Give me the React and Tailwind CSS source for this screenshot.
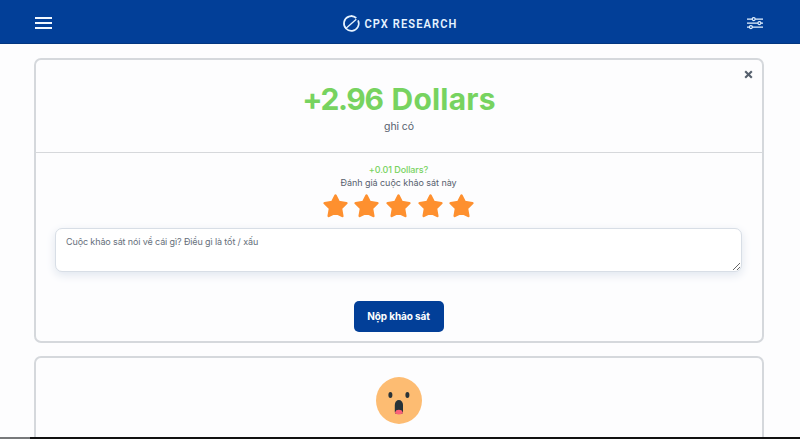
import React, { useState } from "react";

const Star = ({ onClick }) => (
  <button onClick={onClick} className="w-[25px] h-6">
    <svg viewBox="0 0 25 24" className="block w-[25px] h-6" fill="#fe902f">
      <path
        d="M12.5 1.6 L15.8 8 L23.3 9.2 L18 14.4 L19.3 22 L12.5 18.6 L5.7 22 L7 14.4 L1.7 9.2 L9.2 8 Z"
        stroke="#fe902f"
        strokeWidth="2.5"
        strokeLinejoin="round"
      />
    </svg>
  </button>
);

const Logo = () => (
  <svg viewBox="0 0 116 20" className="w-[116px] h-5" fill="none">
    <path
      d="M12.8 3.9A7.4 7.4 0 1 0 16.1 7.4M5.3 4.5A7.4 7.4 0 0 1 14.3 5"
      stroke="#e6f3ff"
      strokeWidth="1.7"
    />
    <path d="M3.5 15.8L14.3 6.2" stroke="#e6f3ff" strokeWidth="1.3" />
    <text
      transform="translate(22.5 14.7) scale(0.88 1)"
      fill="#e6f3ff"
      fontFamily="Roboto, sans-serif"
      fontSize="12.6"
      fontWeight="600"
      textLength="104.5"
      lengthAdjust="spacing"
    >
      CPX RESEARCH
    </text>
  </svg>
);

const Header = () => (
  <header className="h-11 shrink-0 bg-[#023f98] border-b border-[#023680] flex items-center justify-between pt-[2px] pl-[35px] pr-[37px]">
    <button className="w-[17px] flex flex-col gap-[3px]">
      <span className="h-0.5 w-full bg-[#f2f8ff]" />
      <span className="h-0.5 w-full bg-[#f2f8ff]" />
      <span className="h-0.5 w-full bg-[#f2f8ff]" />
    </button>
    <Logo />
    <svg viewBox="0 0 16 14" className="w-4 h-3.5" fill="none" stroke="#e6f3ff" strokeWidth="1.2">
      <path d="M0 3.1H5.2M8.2 3.1H16M0 7.1H10.9M13.9 7.1H16M0 11.1H2.4M5.4 11.1H16" />
      <circle cx="6.7" cy="3.1" r="1.5" />
      <circle cx="12.4" cy="7.1" r="1.5" />
      <circle cx="3.9" cy="11.1" r="1.5" />
    </svg>
  </header>
);

const Face = () => (
  <svg viewBox="0 0 46 47" className="w-[46px] h-[47px]">
    <ellipse cx="23" cy="23.5" rx="23" ry="23.4" fill="#fdbc72" />
    <ellipse cx="14.4" cy="18" rx="2" ry="3" fill="#293338" />
    <ellipse cx="31.4" cy="18" rx="2" ry="3" fill="#293338" />
    <path d="M18.8 34.5V28a4.1 5 0 0 1 8.2 0v6.5a2.6 2.6 0 0 1-2.600 2.600h-3a2.600 2.600 0 0 1-2.600-2.600z" fill="#263238" />
    <path d="M19 35.3a4 3.2 0 0 1 7.8 0a3.9 2.1 0 0 1-7.8 0z" fill="#fa6178" />
  </svg>
);

const App = () => {
  const [rating, setRating] = useState(5);
  const [comment, setComment] = useState("");

  return (
    <div className="h-[439px] overflow-hidden bg-[#fdfdfe] flex flex-col font-['Inter',sans-serif] text-[#57616e]">
      <Header />

      <main className="flex-1 min-h-0 overflow-hidden pt-[14px] pl-[34px] pr-[36px] flex flex-col gap-[13px]">
        {/* Survey rating */}
        <section className="relative h-[285px] shrink-0 border-2 border-[#d5d8dc] rounded-[7px] text-center">
          <button aria-label="close" className="absolute right-[9px] top-[10px]">
            <svg viewBox="0 0 9 9" className="w-[9px] h-[9px]" stroke="#56606d" strokeWidth="2.1">
              <path d="M1.2 1.2L7.8 7.8M7.8 1.2L1.2 7.8" />
            </svg>
          </button>

          <div className="h-[93px] border-b border-[#d6d8db] pt-[21px]">
            <h1 className="flex justify-center gap-[9px] text-[30px] leading-9 font-bold text-[#77d360]">
              <span className="tracking-[-1.4px]">+2.96</span>
              <span className="tracking-[0.2px]">Dollars</span>
            </h1>
            <p className="mt-[2px] text-[10.5px] leading-4 tracking-[-0.1px]">ghi có</p>
          </div>

          <div className="pl-[19px] pr-5 pt-[10px]">
            <p className="text-[9px] leading-[13px] font-medium tracking-[-0.1px] text-[#77d360]">+0.01 Dollars?</p>
            <p className="text-[9px] leading-[13px] tracking-[-0.05px]">Đánh giá cuộc khảo sát này</p>
            <div className="mt-[5px] flex justify-center gap-[6.7px]" data-rating={rating}>
              {[1, 2, 3, 4, 5].map((n) => (
                <Star key={n} onClick={() => setRating(n)} />
              ))}
            </div>
            <textarea
              value={comment}
              onChange={(e) => setComment(e.target.value)}
              placeholder="Cuộc khảo sát nói về cái gì? Điều gì là tốt / xấu"
              className="mt-[10px] block w-full h-[44px] px-[10px] py-[6px] text-[9px] leading-[13px] tracking-[-0.12px] bg-white border border-[#d8dee6] rounded-[7px] shadow-[0_3px_10px_#dfe5ee] placeholder:text-[#66707b] placeholder:opacity-100 resize"
            />
            <button className="mt-[29px] h-[31px] w-[90px] rounded-[5px] bg-[#023f98] text-white text-[10px] font-bold tracking-[-0.1px]">
              Nộp khảo sát
            </button>
          </div>
        </section>

        {/* Next card */}
        <section className="h-[120px] shrink-0 border-2 border-[#d5d8dc] rounded-[7px] pt-[19px] flex justify-center items-start">
          <Face />
        </section>
      </main>

      <footer className="h-0.5 shrink-0 bg-[#111] flex">
        <span className="w-[30px] bg-[#77797b]" />
      </footer>
    </div>
  );
};

export default App;
